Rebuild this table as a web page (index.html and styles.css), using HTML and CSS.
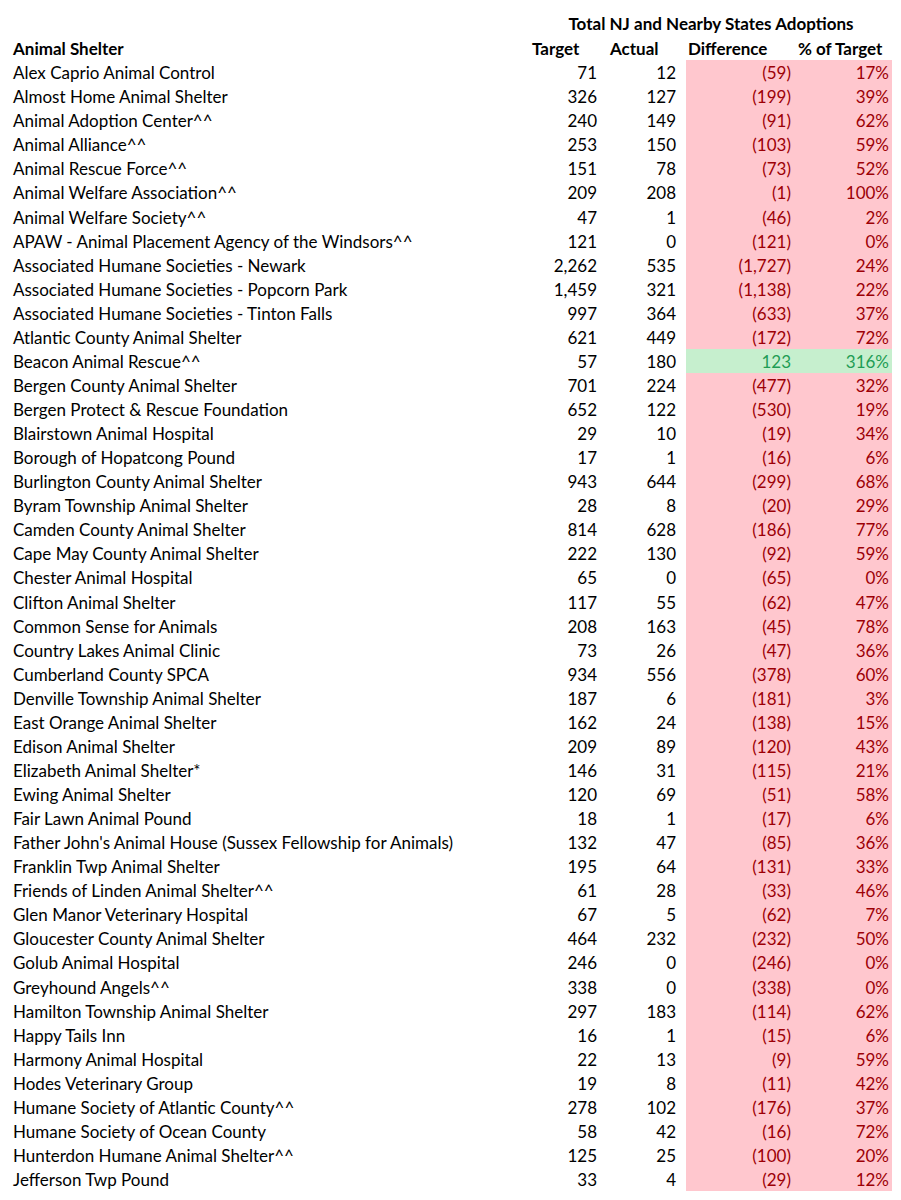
FILE: index.html
```html
<!DOCTYPE html>
<html>
<head>
<meta charset="utf-8">
<link rel="stylesheet" href="styles.css">
</head>
<body>
<div class="sheet">
  <div class="row head1"><div class="c name"></div><div class="group">Total NJ and Nearby States Adoptions</div></div>
  <div class="row head2"><div class="c name">Animal Shelter</div><div class="c h-target">Target</div><div class="c h-actual">Actual</div><div class="c h-diff">Difference</div><div class="c h-pct">% of Target</div></div>
  <div class="row bad"><div class="c name">Alex Caprio Animal Control</div><div class="c target">71</div><div class="c actual">12</div><div class="c diff">(59)</div><div class="c pct">17%</div></div>
  <div class="row bad"><div class="c name">Almost Home Animal Shelter</div><div class="c target">326</div><div class="c actual">127</div><div class="c diff">(199)</div><div class="c pct">39%</div></div>
  <div class="row bad"><div class="c name">Animal Adoption Center^^</div><div class="c target">240</div><div class="c actual">149</div><div class="c diff">(91)</div><div class="c pct">62%</div></div>
  <div class="row bad"><div class="c name">Animal Alliance^^</div><div class="c target">253</div><div class="c actual">150</div><div class="c diff">(103)</div><div class="c pct">59%</div></div>
  <div class="row bad"><div class="c name">Animal Rescue Force^^</div><div class="c target">151</div><div class="c actual">78</div><div class="c diff">(73)</div><div class="c pct">52%</div></div>
  <div class="row bad"><div class="c name">Animal Welfare Association^^</div><div class="c target">209</div><div class="c actual">208</div><div class="c diff">(1)</div><div class="c pct">100%</div></div>
  <div class="row bad"><div class="c name">Animal Welfare Society^^</div><div class="c target">47</div><div class="c actual">1</div><div class="c diff">(46)</div><div class="c pct">2%</div></div>
  <div class="row bad"><div class="c name">APAW - Animal Placement Agency of the Windsors^^</div><div class="c target">121</div><div class="c actual">0</div><div class="c diff">(121)</div><div class="c pct">0%</div></div>
  <div class="row bad"><div class="c name">Associated Humane Societies - Newark</div><div class="c target">2,262</div><div class="c actual">535</div><div class="c diff">(1,727)</div><div class="c pct">24%</div></div>
  <div class="row bad"><div class="c name">Associated Humane Societies - Popcorn Park</div><div class="c target">1,459</div><div class="c actual">321</div><div class="c diff">(1,138)</div><div class="c pct">22%</div></div>
  <div class="row bad"><div class="c name">Associated Humane Societies - Tinton Falls</div><div class="c target">997</div><div class="c actual">364</div><div class="c diff">(633)</div><div class="c pct">37%</div></div>
  <div class="row bad"><div class="c name">Atlantic County Animal Shelter</div><div class="c target">621</div><div class="c actual">449</div><div class="c diff">(172)</div><div class="c pct">72%</div></div>
  <div class="row good"><div class="c name">Beacon Animal Rescue^^</div><div class="c target">57</div><div class="c actual">180</div><div class="c diff">123</div><div class="c pct">316%</div></div>
  <div class="row bad"><div class="c name">Bergen County Animal Shelter</div><div class="c target">701</div><div class="c actual">224</div><div class="c diff">(477)</div><div class="c pct">32%</div></div>
  <div class="row bad"><div class="c name">Bergen Protect &amp; Rescue Foundation</div><div class="c target">652</div><div class="c actual">122</div><div class="c diff">(530)</div><div class="c pct">19%</div></div>
  <div class="row bad"><div class="c name">Blairstown Animal Hospital</div><div class="c target">29</div><div class="c actual">10</div><div class="c diff">(19)</div><div class="c pct">34%</div></div>
  <div class="row bad"><div class="c name">Borough of Hopatcong Pound</div><div class="c target">17</div><div class="c actual">1</div><div class="c diff">(16)</div><div class="c pct">6%</div></div>
  <div class="row bad"><div class="c name">Burlington County Animal Shelter</div><div class="c target">943</div><div class="c actual">644</div><div class="c diff">(299)</div><div class="c pct">68%</div></div>
  <div class="row bad"><div class="c name">Byram Township Animal Shelter</div><div class="c target">28</div><div class="c actual">8</div><div class="c diff">(20)</div><div class="c pct">29%</div></div>
  <div class="row bad"><div class="c name">Camden County Animal Shelter</div><div class="c target">814</div><div class="c actual">628</div><div class="c diff">(186)</div><div class="c pct">77%</div></div>
  <div class="row bad"><div class="c name">Cape May County Animal Shelter</div><div class="c target">222</div><div class="c actual">130</div><div class="c diff">(92)</div><div class="c pct">59%</div></div>
  <div class="row bad"><div class="c name">Chester Animal Hospital</div><div class="c target">65</div><div class="c actual">0</div><div class="c diff">(65)</div><div class="c pct">0%</div></div>
  <div class="row bad"><div class="c name">Clifton Animal Shelter</div><div class="c target">117</div><div class="c actual">55</div><div class="c diff">(62)</div><div class="c pct">47%</div></div>
  <div class="row bad"><div class="c name">Common Sense for Animals</div><div class="c target">208</div><div class="c actual">163</div><div class="c diff">(45)</div><div class="c pct">78%</div></div>
  <div class="row bad"><div class="c name">Country Lakes Animal Clinic</div><div class="c target">73</div><div class="c actual">26</div><div class="c diff">(47)</div><div class="c pct">36%</div></div>
  <div class="row bad"><div class="c name">Cumberland County SPCA</div><div class="c target">934</div><div class="c actual">556</div><div class="c diff">(378)</div><div class="c pct">60%</div></div>
  <div class="row bad"><div class="c name">Denville Township Animal Shelter</div><div class="c target">187</div><div class="c actual">6</div><div class="c diff">(181)</div><div class="c pct">3%</div></div>
  <div class="row bad"><div class="c name">East Orange Animal Shelter</div><div class="c target">162</div><div class="c actual">24</div><div class="c diff">(138)</div><div class="c pct">15%</div></div>
  <div class="row bad"><div class="c name">Edison Animal Shelter</div><div class="c target">209</div><div class="c actual">89</div><div class="c diff">(120)</div><div class="c pct">43%</div></div>
  <div class="row bad"><div class="c name">Elizabeth Animal Shelter*</div><div class="c target">146</div><div class="c actual">31</div><div class="c diff">(115)</div><div class="c pct">21%</div></div>
  <div class="row bad"><div class="c name">Ewing Animal Shelter</div><div class="c target">120</div><div class="c actual">69</div><div class="c diff">(51)</div><div class="c pct">58%</div></div>
  <div class="row bad"><div class="c name">Fair Lawn Animal Pound</div><div class="c target">18</div><div class="c actual">1</div><div class="c diff">(17)</div><div class="c pct">6%</div></div>
  <div class="row bad"><div class="c name">Father John's Animal House (Sussex Fellowship for Animals)</div><div class="c target">132</div><div class="c actual">47</div><div class="c diff">(85)</div><div class="c pct">36%</div></div>
  <div class="row bad"><div class="c name">Franklin Twp Animal Shelter</div><div class="c target">195</div><div class="c actual">64</div><div class="c diff">(131)</div><div class="c pct">33%</div></div>
  <div class="row bad"><div class="c name">Friends of Linden Animal Shelter^^</div><div class="c target">61</div><div class="c actual">28</div><div class="c diff">(33)</div><div class="c pct">46%</div></div>
  <div class="row bad"><div class="c name">Glen Manor Veterinary Hospital</div><div class="c target">67</div><div class="c actual">5</div><div class="c diff">(62)</div><div class="c pct">7%</div></div>
  <div class="row bad"><div class="c name">Gloucester County Animal Shelter</div><div class="c target">464</div><div class="c actual">232</div><div class="c diff">(232)</div><div class="c pct">50%</div></div>
  <div class="row bad"><div class="c name">Golub Animal Hospital</div><div class="c target">246</div><div class="c actual">0</div><div class="c diff">(246)</div><div class="c pct">0%</div></div>
  <div class="row bad"><div class="c name">Greyhound Angels^^</div><div class="c target">338</div><div class="c actual">0</div><div class="c diff">(338)</div><div class="c pct">0%</div></div>
  <div class="row bad"><div class="c name">Hamilton Township Animal Shelter</div><div class="c target">297</div><div class="c actual">183</div><div class="c diff">(114)</div><div class="c pct">62%</div></div>
  <div class="row bad"><div class="c name">Happy Tails Inn</div><div class="c target">16</div><div class="c actual">1</div><div class="c diff">(15)</div><div class="c pct">6%</div></div>
  <div class="row bad"><div class="c name">Harmony Animal Hospital</div><div class="c target">22</div><div class="c actual">13</div><div class="c diff">(9)</div><div class="c pct">59%</div></div>
  <div class="row bad"><div class="c name">Hodes Veterinary Group</div><div class="c target">19</div><div class="c actual">8</div><div class="c diff">(11)</div><div class="c pct">42%</div></div>
  <div class="row bad"><div class="c name">Humane Society of Atlantic County^^</div><div class="c target">278</div><div class="c actual">102</div><div class="c diff">(176)</div><div class="c pct">37%</div></div>
  <div class="row bad"><div class="c name">Humane Society of Ocean County</div><div class="c target">58</div><div class="c actual">42</div><div class="c diff">(16)</div><div class="c pct">72%</div></div>
  <div class="row bad"><div class="c name">Hunterdon Humane Animal Shelter^^</div><div class="c target">125</div><div class="c actual">25</div><div class="c diff">(100)</div><div class="c pct">20%</div></div>
  <div class="row bad"><div class="c name">Jefferson Twp Pound</div><div class="c target">33</div><div class="c actual">4</div><div class="c diff">(29)</div><div class="c pct">12%</div></div>
</div>
</body>
</html>
```

FILE: styles.css
```css
html, body {
  margin: 0;
  padding: 0;
  background: #ffffff;
}
.sheet {
  padding-top: 12px;
  font-family: Lato, "Noto Sans", sans-serif;
  font-size: 17px;
  color: #000000;
}
.row {
  display: grid;
  grid-template-columns: 530px 76px 80px 110px 96px;
  height: 24.07px;
  align-items: stretch;
  line-height: 24px;
}
.c {
  white-space: nowrap;
  box-sizing: border-box;
  padding-top: 1px;
}
.name {
  padding-left: 13px;
}
.head1, .head2 {
  font-weight: bold;
}
.group {
  grid-column: 2 / 6;
  text-align: center;
  padding-top: 0;
}
.h-target { padding-left: 2px; }
.h-actual { padding-left: 4px; }
.h-diff { padding-left: 2px; }
.h-pct { padding-left: 2px; }
.target, .actual, .diff, .pct {
  text-align: right;
}
.target { padding-right: 9px; }
.actual { padding-right: 10px; }
.diff { padding-right: 5px; }
.pct { padding-right: 3px; }
.bad .diff, .bad .pct {
  background: #ffc7ce;
  color: #9c0006;
}
.good .diff, .good .pct {
  background: #c6efce;
  color: #1f9d55;
}
```
